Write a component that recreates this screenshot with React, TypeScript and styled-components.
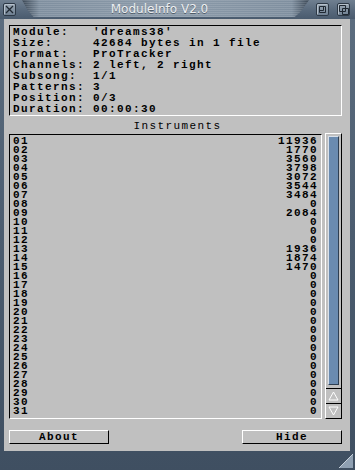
import React from 'react';
import styled, { createGlobalStyle } from 'styled-components';

const GlobalStyle = createGlobalStyle`
    html, body {
        margin: 0;
        padding: 0;
        background: #46576a;
    }
`;

const mono = `'Liberation Mono', 'DejaVu Sans Mono', monospace`;

const Window = styled.div`
    width: 355px;
    height: 470px;
    display: flex;
    flex-direction: column;
    background: linear-gradient(180deg, #5d6e80 0%, #4b5c6f 50%, #3f4f61 100%);
    overflow: hidden;
`;

const TitleBar = styled.div`
    height: 20px;
    display: flex;
    align-items: flex-start;
    padding: 0 5px 0 3px;
    background: linear-gradient(180deg, #6f7f90 0%, #56677a 60%, #4a5b6e 100%);
`;

const Gadget = styled.div<{ gap?: number }>`
    width: 13px;
    height: 13px;
    margin-top: 3px;
    margin-left: ${props => props.gap || 0}px;
    box-sizing: border-box;
    border: 1px solid #2c3845;
    border-radius: 2px;
    background: linear-gradient(180deg, #9aa7b4 0%, #74849500 100%), #6f8092;
    box-shadow: inset 1px 1px 0 #b5c0cb;
    display: flex;
    align-items: center;
    justify-content: center;
`;

const DragBar = styled.div`
    flex: 1;
    height: 17px;
    margin: 0 7px 0 6px;
    clip-path: polygon(0 0, 100% 0, 97% 70%, 95% 100%, 4% 100%, 2% 60%);
    background:
        repeating-linear-gradient(180deg, rgba(255, 255, 255, 0.12) 0 1px, rgba(0, 0, 0, 0) 1px 2px),
        linear-gradient(90deg, #3b4856 0%, #7f8f9f 6%, #8b9aa9 50%, #7f8f9f 94%, #3b4856 100%);
    display: flex;
    align-items: center;
    justify-content: center;
`;

const Title = styled.span`
    font-family: 'DejaVu Sans', Verdana, sans-serif;
    font-size: 12px;
    color: #eef0f2;
    text-shadow: 0 1px 0 rgba(40, 50, 60, 0.6);
    margin-top: 1px;
    margin-right: 12px;
`;

const Body = styled.div`
    flex: 1;
    margin: 0 5px 0 4px;
    background: #c0c0c0;
    padding: 6px 8px 7px 5px;
    display: flex;
    flex-direction: column;
    font-family: ${mono};
    font-size: 11px;
    font-weight: bold;
    letter-spacing: 1.4px;
    color: #000;
`;

const Sunken = styled.div`
    box-sizing: border-box;
    border-style: solid;
    border-width: 1px;
    border-color: #000 #fff #fff #000;
`;

const InfoBox = styled(Sunken)`
    height: 91px;
    padding: 1px 3px 0;
    line-height: 11px;
    white-space: pre;
`;

const Label = styled.div`
    height: 18px;
    line-height: 21px;
    text-align: center;
    font-weight: normal;
    padding-left: 4px;
`;

const ListRow = styled.div`
    height: 285px;
    display: flex;
`;

const List = styled(Sunken)`
    flex: 1;
    padding: 2px 3px 0 3px;
    line-height: 9px;
    overflow: hidden;
`;

const Entry = styled.div`
    display: flex;
    justify-content: space-between;
    height: 9px;
`;

const Scroller = styled.div`
    width: 17px;
    margin-left: 3px;
    margin-top: -1px;
    box-sizing: border-box;
    display: flex;
    flex-direction: column;
    border-style: solid;
    border-width: 1px;
    border-color: #fff #000 #000 #fff;
`;

const Track = styled.div`
    flex: 1;
    padding: 2px 2px 3px 2px;
    display: flex;
`;

const Thumb = styled.div`
    flex: 1;
    box-sizing: border-box;
    background: #6a8bb0;
    border-style: solid;
    border-width: 1px;
    border-color: #d8e0ea #2e3f52 #2e3f52 #d8e0ea;
`;

const Arrow = styled.div`
    height: 15px;
    box-sizing: border-box;
    border-top: 1px solid #000;
    display: flex;
    align-items: center;
    justify-content: center;
`;

const Buttons = styled.div`
    display: flex;
    justify-content: space-between;
    margin-top: 11px;
`;

const Button = styled.div`
    width: 100px;
    height: 14px;
    box-sizing: border-box;
    border-style: solid;
    border-width: 1px;
    border-color: #fff #000 #000 #fff;
    text-align: center;
    line-height: 12px;
`;

const Footer = styled.div`
    height: 18px;
    display: flex;
    justify-content: flex-end;
    align-items: flex-end;
    padding: 0 2px 2px 0;
`;

const info = [
    ['Module:', "'dreams38'"],
    ['Size:', '42684 bytes in 1 file'],
    ['Format:', 'ProTracker'],
    ['Channels:', '2 left, 2 right'],
    ['Subsong:', '1/1'],
    ['Patterns:', '3'],
    ['Position:', '0/3'],
    ['Duration:', '00:00:30'],
];

const sizes: Record<number, number> = {
    1: 11936,
    2: 1770,
    3: 3560,
    4: 3798,
    5: 3072,
    6: 3544,
    7: 3484,
    9: 2084,
    13: 1936,
    14: 1874,
    15: 1470,
};

const instruments = Array.from({ length: 31 }, (_, i) => ({
    id: String(i + 1).padStart(2, '0'),
    size: sizes[i + 1] || 0,
}));

export default function App() {
    return (
        <>
            <GlobalStyle />
            <Window>
                <TitleBar>
                    <Gadget>
                        <svg width="9" height="9" viewBox="0 0 9 9">
                            <path d="M1 1 L8 8 M8 1 L1 8" stroke="#1f2832" strokeWidth="1.3" />
                        </svg>
                    </Gadget>
                    <DragBar>
                        <Title>ModuleInfo V2.0</Title>
                    </DragBar>
                    <Gadget>
                        <svg width="9" height="9" viewBox="0 0 9 9">
                            <path d="M1.5 1.5 H7.5 V7.5 H1.5 Z M5.5 1.5 V5.5 H1.5" stroke="#1f2832" fill="none" />
                        </svg>
                    </Gadget>
                    <Gadget gap={8}>
                        <svg width="10" height="10" viewBox="0 0 10 10">
                            <path d="M0.5 0.5 H6.5 V6.5 H0.5 Z M3.5 3.5 H9.5 V9.5 H3.5 Z" stroke="#1f2832" fill="none" />
                        </svg>
                    </Gadget>
                </TitleBar>
                <Body>
                    <InfoBox>
                        {info.map(([k, v]) => (
                            <div key={k}>{k.padEnd(10, ' ') + v}</div>
                        ))}
                    </InfoBox>
                    <Label>Instruments</Label>
                    <ListRow>
                        <List>
                            {instruments.map(ins => (
                                <Entry key={ins.id}>
                                    <span>{ins.id}</span>
                                    <span>{ins.size}</span>
                                </Entry>
                            ))}
                        </List>
                        <Scroller>
                            <Track>
                                <Thumb />
                            </Track>
                            <Arrow>
                                <svg width="11" height="10" viewBox="0 0 11 10">
                                    <path d="M5.5 1 L10 9 H1 Z" stroke="#fff" fill="none" />
                                </svg>
                            </Arrow>
                            <Arrow>
                                <svg width="11" height="10" viewBox="0 0 11 10">
                                    <path d="M1 1 H10 L5.5 9 Z" stroke="#fff" fill="none" />
                                </svg>
                            </Arrow>
                        </Scroller>
                    </ListRow>
                    <Buttons>
                        <Button>About</Button>
                        <Button>Hide</Button>
                    </Buttons>
                </Body>
                <Footer>
                    <svg width="14" height="14" viewBox="0 0 14 14">
                        <path d="M14 0 L14 14 L0 14 Z" fill="#8fa0b2" />
                        <path d="M14 0 L0 14" stroke="#c6d0da" strokeWidth="1" />
                    </svg>
                </Footer>
            </Window>
        </>
    );
}
